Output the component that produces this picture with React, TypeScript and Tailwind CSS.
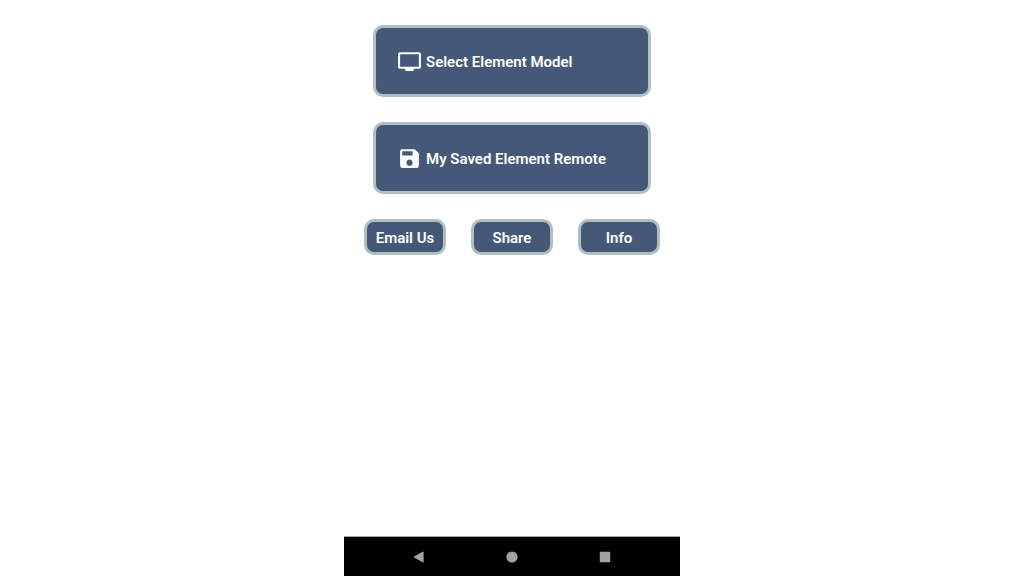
import type { ReactNode } from "react";
import { MdSave, MdTv } from "react-icons/md";

const buttonStyle = "bg-[#465878] border-[#afbfc2] text-white font-semibold text-[15px] leading-5 rounded-[10px]";

function MenuButton({ icon, label }: { icon: ReactNode; label: string }) {
    return (
        <button className={`${buttonStyle} w-full h-[72px] border-3 px-[21px] flex items-center gap-1 text-left`}>
            {icon}
            <span className="pt-0.5">{label}</span>
        </button>
    );
}

function SmallButton({ label }: { label: string }) {
    return (
        <button className={`${buttonStyle} flex-1 h-9 border-3 flex items-center justify-center whitespace-nowrap`}>
            <span className="pt-0.5">{label}</span>
        </button>
    );
}

function NavBar() {
    return (
        <nav className="h-10 bg-black border-t border-[#a3a3a3] text-[#a3a3a3] flex items-center justify-center gap-[69px]">
            <button aria-label="Back" className="w-6 h-6 flex items-center justify-center">
                <svg viewBox="0 0 12 12" className="w-3 h-3" fill="currentColor">
                    <path d="M10.6 0.9v10.2q0 .5-.5.3L1 6.4q-.6-.4 0-.8l9.1-5q.5-.2.5.3z" />
                </svg>
            </button>
            <button aria-label="Home" className="w-6 h-6 flex items-center justify-center">
                <svg viewBox="0 0 12 12" className="w-3 h-3" fill="currentColor">
                    <circle cx="6" cy="6" r="5.6" />
                </svg>
            </button>
            <button aria-label="Recent apps" className="w-6 h-6 flex items-center justify-center">
                <svg viewBox="0 0 12 12" className="w-3 h-3" fill="currentColor">
                    <rect x="0.8" y="0.8" width="10.4" height="10.4" rx="0.6" />
                </svg>
            </button>
        </nav>
    );
}

export default function App() {
    return (
        <div className="min-h-screen bg-white font-[Roboto,sans-serif]">
            <div className="w-full max-w-[336px] min-h-screen mx-auto flex flex-col">
                <main className="flex-1 px-5 pt-[25px] flex flex-col gap-[25px]">
                    <div className="px-[9px] flex flex-col gap-[25px]">
                        <MenuButton icon={<MdTv size={25} />} label="Select Element Model" />
                        <MenuButton icon={<MdSave size={25} />} label="My Saved Element Remote" />
                    </div>
                    <div className="flex gap-[25px]">
                        <SmallButton label="Email Us" />
                        <SmallButton label="Share" />
                        <SmallButton label="Info" />
                    </div>
                </main>
                <NavBar />
            </div>
        </div>
    );
}
